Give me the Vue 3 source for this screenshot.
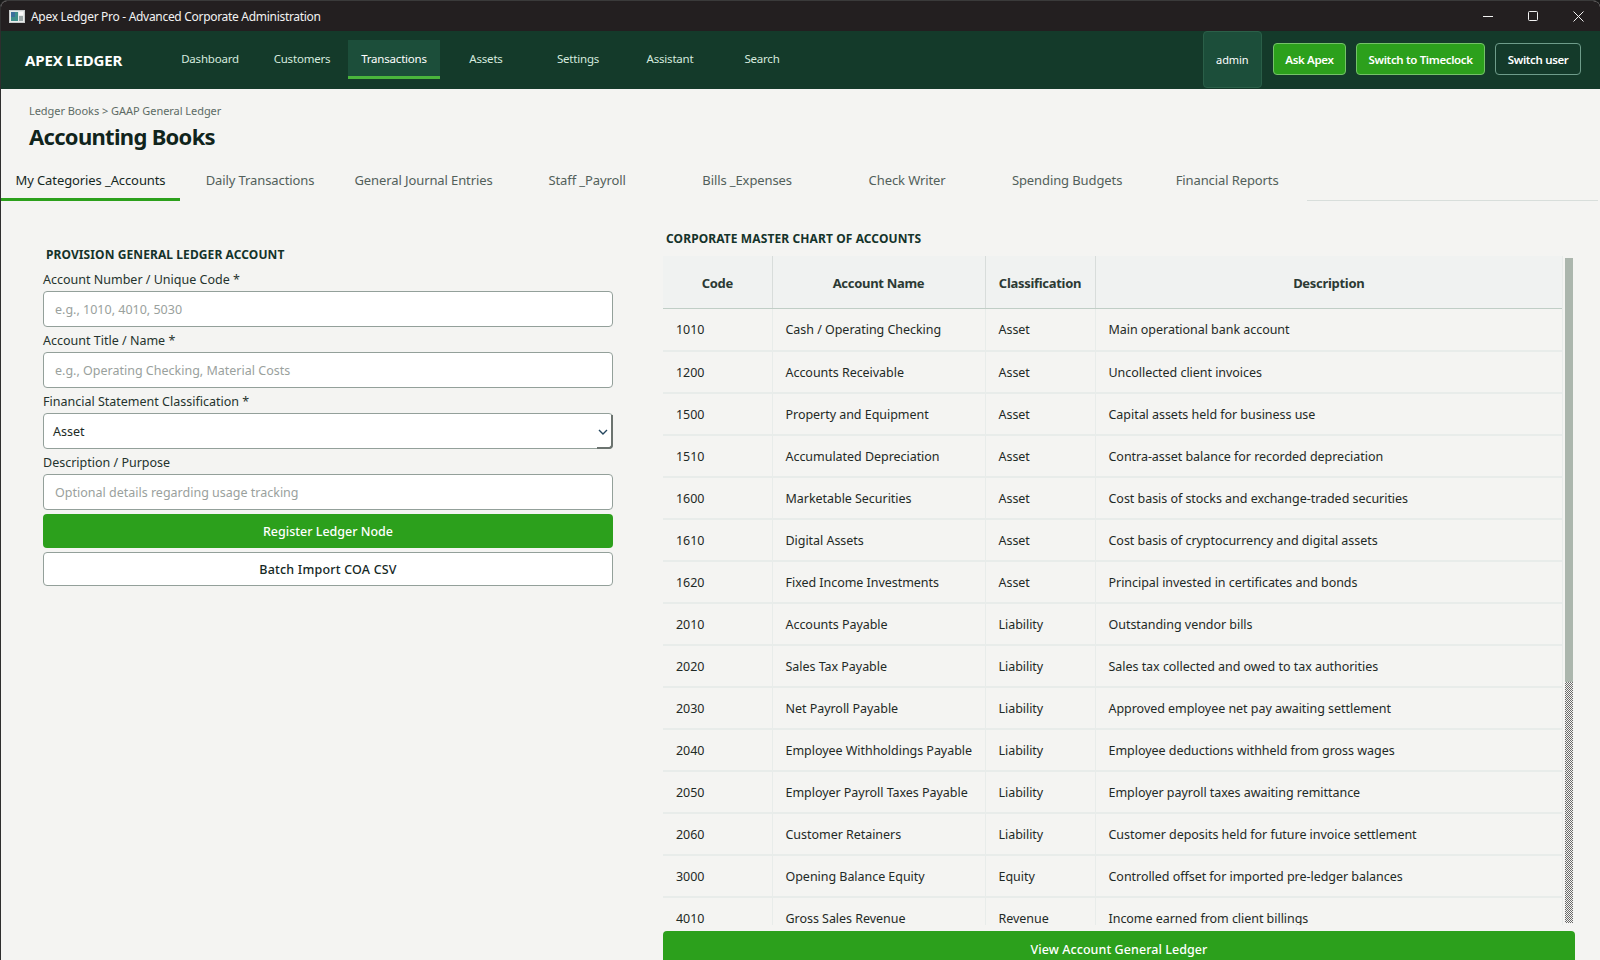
<template>
  <div class="window">
    <div class="titlebar">
      <svg class="app-icon" width="16" height="13" viewBox="0 0 16 13">
        <rect x="0.5" y="0.5" width="15" height="12" fill="#e8ecea" stroke="#c8cccc" />
        <rect x="2" y="2" width="7" height="9" fill="#3f8f8a" />
        <rect x="2" y="2" width="4" height="5" fill="#3c6f9c" />
        <rect x="10" y="2" width="4" height="3" fill="#fafafa" />
        <rect x="10" y="6" width="4" height="5" fill="#9aa6a6" />
      </svg>
      <span class="window-title">Apex Ledger Pro - Advanced Corporate Administration</span>
      <div class="win-controls">
        <svg width="10" height="10" viewBox="0 0 10 10"><path d="M0 5.5h10" stroke="#f2f2f2" fill="none" /></svg>
        <svg width="10" height="10" viewBox="0 0 10 10"><rect x="0.5" y="0.5" width="9" height="9" rx="1" stroke="#f2f2f2" fill="none" /></svg>
        <svg width="11" height="11" viewBox="0 0 11 11"><path d="M0.5 0.5l10 10M10.5 0.5l-10 10" stroke="#f2f2f2" fill="none" /></svg>
      </div>
    </div>

    <header class="navbar">
      <div class="brand">APEX LEDGER</div>
      <nav class="nav-items">
        <a v-for="item in navItems" :key="item" class="nav-item" :class="{ active: item === 'Transactions' }">{{ item }}</a>
      </nav>
      <div class="nav-right">
        <div class="user-chip">admin</div>
        <button type="button" class="nav-btn green">Ask Apex</button>
        <button type="button" class="nav-btn green">Switch to Timeclock</button>
        <button type="button" class="nav-btn outline">Switch user</button>
      </div>
    </header>

    <main class="page">
      <div class="crumbs">Ledger Books &gt; GAAP General Ledger</div>
      <h1 class="page-title">Accounting Books</h1>

      <div class="tabs">
        <a v-for="(tab, i) in tabs" :key="tab" class="tab" :class="{ active: i === 0 }">{{ tab }}</a>
        <div class="tabs-rest"></div>
      </div>

      <div class="content">
        <section class="form-col">
          <h2 class="form-heading">PROVISION GENERAL LEDGER ACCOUNT</h2>
          <label class="field-label">Account Number / Unique Code *</label>
          <input class="field" type="text" placeholder="e.g., 1010, 4010, 5030" />
          <label class="field-label">Account Title / Name *</label>
          <input class="field" type="text" placeholder="e.g., Operating Checking, Material Costs" />
          <label class="field-label">Financial Statement Classification *</label>
          <div class="select-box">
            <span>Asset</span>
            <svg width="10" height="6" viewBox="0 0 10 6"><path d="M1 1l4 4 4-4" fill="none" stroke="#24465e" stroke-width="1.4" /></svg>
          </div>
          <label class="field-label">Description / Purpose</label>
          <input class="field" type="text" placeholder="Optional details regarding usage tracking" />
          <button type="button" class="form-btn primary">Register Ledger Node</button>
          <button type="button" class="form-btn secondary">Batch Import COA CSV</button>
        </section>

        <section class="chart-col">
          <h2 class="chart-heading">CORPORATE MASTER CHART OF ACCOUNTS</h2>
          <div class="table-area">
            <div class="table-clip">
              <table class="accounts">
                <colgroup>
                  <col class="col-code" />
                  <col class="col-name" />
                  <col class="col-class" />
                  <col />
                </colgroup>
                <thead>
                  <tr>
                    <th>Code</th>
                    <th>Account Name</th>
                    <th>Classification</th>
                    <th>Description</th>
                  </tr>
                </thead>
                <tbody>
                  <tr v-for="row in accounts" :key="row[0]">
                    <td v-for="cell in row" :key="cell">{{ cell }}</td>
                  </tr>
                </tbody>
              </table>
            </div>
            <div class="scrollbar">
              <div class="scroll-thumb"></div>
              <div class="scroll-track"></div>
            </div>
          </div>
          <button type="button" class="view-btn">View Account General Ledger</button>
        </section>
      </div>
    </main>
  </div>
</template>

<script setup>
const navItems = ['Dashboard', 'Customers', 'Transactions', 'Assets', 'Settings', 'Assistant', 'Search']

const tabs = [
  'My Categories _Accounts',
  'Daily Transactions',
  'General Journal Entries',
  'Staff _Payroll',
  'Bills _Expenses',
  'Check Writer',
  'Spending Budgets',
  'Financial Reports'
]

const accounts = [
  ['1010', 'Cash / Operating Checking', 'Asset', 'Main operational bank account'],
  ['1200', 'Accounts Receivable', 'Asset', 'Uncollected client invoices'],
  ['1500', 'Property and Equipment', 'Asset', 'Capital assets held for business use'],
  ['1510', 'Accumulated Depreciation', 'Asset', 'Contra-asset balance for recorded depreciation'],
  ['1600', 'Marketable Securities', 'Asset', 'Cost basis of stocks and exchange-traded securities'],
  ['1610', 'Digital Assets', 'Asset', 'Cost basis of cryptocurrency and digital assets'],
  ['1620', 'Fixed Income Investments', 'Asset', 'Principal invested in certificates and bonds'],
  ['2010', 'Accounts Payable', 'Liability', 'Outstanding vendor bills'],
  ['2020', 'Sales Tax Payable', 'Liability', 'Sales tax collected and owed to tax authorities'],
  ['2030', 'Net Payroll Payable', 'Liability', 'Approved employee net pay awaiting settlement'],
  ['2040', 'Employee Withholdings Payable', 'Liability', 'Employee deductions withheld from gross wages'],
  ['2050', 'Employer Payroll Taxes Payable', 'Liability', 'Employer payroll taxes awaiting remittance'],
  ['2060', 'Customer Retainers', 'Liability', 'Customer deposits held for future invoice settlement'],
  ['3000', 'Opening Balance Equity', 'Equity', 'Controlled offset for imported pre-ledger balances'],
  ['4010', 'Gross Sales Revenue', 'Revenue', 'Income earned from client billings']
]
</script>

<style>
html, body {
  margin: 0;
  height: 100%;
  overflow: hidden;
  background: #1a1a1a;
}
</style>

<style scoped>
.window {
  width: 1600px;
  height: 960px;
  display: flex;
  flex-direction: column;
  overflow: hidden;
  box-sizing: border-box;
  border-left: 1px solid #2e2e2e;
  border-top: 1px solid #3a3a3a;
  border-top-left-radius: 7px;
  border-top-right-radius: 7px;
  font-family: "Noto Sans", "Open Sans", sans-serif;
  font-size: 12px;
  background: #f4f4f2;
}

.titlebar {
  height: 30px;
  flex: none;
  display: flex;
  align-items: center;
  padding-left: 8px;
  background: #231f20;
  color: #f2f2f2;
}

.app-icon {
  margin-right: 6px;
}

.window-title {
  font-size: 12px;
  letter-spacing: -0.3px;
}

.win-controls {
  margin-left: auto;
  display: flex;
  align-items: center;
  gap: 35px;
  padding-right: 16px;
}

.navbar {
  height: 58px;
  flex: none;
  display: flex;
  align-items: stretch;
  background: #143a2a;
  color: #fff;
}

.brand {
  width: 163px;
  padding-left: 24px;
  box-sizing: border-box;
  align-self: center;
  font-size: 15px;
  font-weight: 700;
  letter-spacing: -0.15px;
}

.nav-items {
  display: flex;
  align-items: flex-start;
  padding-top: 9px;
}

.nav-item {
  width: 92px;
  height: 39px;
  box-sizing: border-box;
  display: flex;
  align-items: center;
  justify-content: center;
  border-bottom: 3px solid transparent;
  color: #d6eadf;
  font-size: 11.5px;
  letter-spacing: -0.2px;
}

.nav-item.active {
  background: #1c4e3a;
  border-bottom-color: #4ab53c;
  color: #fff;
}

.nav-right {
  margin-left: auto;
  padding: 0 19px 2px 0;
  display: flex;
  align-items: center;
  gap: 10px;
}

.user-chip {
  width: 59px;
  height: 57px;
  margin-right: 1px;
  align-self: flex-start;
  box-sizing: border-box;
  display: flex;
  align-items: center;
  justify-content: center;
  background: #1c4e3a;
  border: 1px solid #2a5f48;
  border-radius: 4px;
  font-size: 11px;
  letter-spacing: -0.1px;
}

.nav-btn {
  height: 32px;
  padding: 0 11.5px;
  border-radius: 4px;
  font-family: inherit;
  font-size: 11.5px;
  font-weight: 600;
  letter-spacing: -0.35px;
  color: #fff;
}

.nav-btn.green {
  background: #2ca01c;
  border: 1px solid #74c268;
}

.nav-btn.outline {
  background: transparent;
  border: 1px solid #6f9c8a;
}

.page {
  flex: 1;
  min-height: 0;
  display: flex;
  flex-direction: column;
  color: #1c2b25;
}

.crumbs {
  margin: 14px 0 0 28px;
  line-height: 16px;
  font-size: 11px;
  letter-spacing: -0.05px;
  color: #5d6b65;
}

.page-title {
  margin: 2px 0 0 28px;
  line-height: 31px;
  font-size: 22px;
  font-weight: 700;
  letter-spacing: -0.7px;
  color: #10241c;
}

.tabs {
  height: 36px;
  margin-top: 13px;
  flex: none;
  display: flex;
}

.tab {
  min-width: 160px;
  padding: 0 14.5px 3px;
  box-sizing: border-box;
  display: flex;
  align-items: center;
  justify-content: center;
  border-bottom: 3px solid transparent;
  font-size: 13px;
  letter-spacing: -0.1px;
  color: #52605a;
}

.tab.active {
  border-bottom-color: #2ca01c;
  color: #14281f;
}

.tabs-rest {
  flex: 1;
  margin-right: 2px;
  border-bottom: 1px solid #d8dedb;
}

.content {
  flex: 1;
  min-height: 0;
  display: flex;
}

.form-col {
  width: 570px;
  margin: 42px 0 0 42px;
  display: flex;
  flex-direction: column;
}

.form-heading {
  margin: 0 0 0 3px;
  line-height: 23px;
  font-size: 12px;
  font-weight: 700;
  letter-spacing: 0.09px;
  color: #14332a;
}

.field-label {
  margin-top: 4px;
  line-height: 20px;
  font-size: 12.5px;
  color: #24332d;
}

.field-label + .field,
.field-label + .select-box {
  margin-top: 1px;
}

.field {
  height: 36px;
  padding: 1px 11px 0;
  box-sizing: border-box;
  background: #fff;
  border: 1px solid #93a09a;
  border-radius: 4px;
  outline: none;
  font-family: inherit;
  font-size: 12.5px;
}

.field::placeholder {
  color: #9aa19d;
  opacity: 1;
}

.select-box {
  position: relative;
  height: 36px;
  padding: 1px 4px 0 9px;
  box-sizing: border-box;
  display: flex;
  align-items: center;
  justify-content: space-between;
  background: #fff;
  border: 1px solid #93a09a;
  border-radius: 4px;
  font-size: 12.5px;
}

/* Dark corner that the native combo draws round its arrow */
.select-box::after {
  content: "";
  position: absolute;
  right: -1px;
  bottom: -1px;
  width: 16px;
  height: 34px;
  box-sizing: border-box;
  border-right: 2px solid #6b736f;
  border-bottom: 2px solid #6b736f;
  border-bottom-right-radius: 4px;
}

.form-btn {
  height: 34px;
  padding-top: 1px;
  box-sizing: border-box;
  border-radius: 4px;
  font-family: inherit;
  font-size: 12.5px;
  font-weight: 500;
}

.form-btn.primary {
  margin-top: 4px;
  background: #2ca01c;
  border: none;
  color: #fff;
}

.form-btn.secondary {
  margin-top: 4px;
  padding-top: 2px;
  background: #fff;
  border: 1px solid #93a09a;
  letter-spacing: 0.2px;
  color: #14281f;
}

.chart-col {
  width: 912px;
  margin-left: 50px;
  display: flex;
  flex-direction: column;
}

.chart-heading {
  margin: 28px 0 0 3px;
  line-height: 20px;
  font-size: 12px;
  font-weight: 700;
  letter-spacing: 0.1px;
  color: #14332a;
}

.table-area {
  height: 669px;
  margin-top: 7px;
  flex: none;
  display: flex;
  gap: 2px;
}

.table-clip {
  width: 900px;
  overflow: hidden;
  border-right: 1px solid #e8ecea;
  box-sizing: border-box;
}

.accounts {
  width: 899px;
  table-layout: fixed;
  border-collapse: collapse;
  font-size: 12.5px;
  letter-spacing: -0.04px;
}

.col-code {
  width: 109px;
}

.col-name {
  width: 213px;
}

.col-class {
  width: 110px;
}

.accounts th {
  height: 52px;
  padding: 2px 6px 0;
  box-sizing: border-box;
  background: #f0f2f1;
  border-right: 1px solid #d8dddb;
  border-bottom: 1px solid #c0cec6;
  font-size: 13px;
  font-weight: 700;
  letter-spacing: -0.3px;
  color: #2c3a34;
}

.accounts td {
  height: 42px;
  padding: 0 13px;
  box-sizing: border-box;
  border-right: 1px solid #e8ecea;
  border-bottom: 2px solid #e8ecea;
  color: #1f2a26;
  white-space: nowrap;
}

.accounts tbody tr:first-child td {
  height: 43px;
  padding-top: 1px;
}

.accounts th:last-child,
.accounts td:last-child {
  border-right: none;
}

.scrollbar {
  width: 8px;
  margin-top: 2px;
  height: 665px;
  display: flex;
  flex-direction: column;
}

.scroll-thumb {
  height: 424px;
  background: #abb6ad;
}

.scroll-track {
  flex: 1;
  background: repeating-conic-gradient(#6a6a6a 0 25%, #f4f4f2 0 50%) 0 0 / 2px 2px;
}

.view-btn {
  height: 36px;
  margin-top: 6px;
  flex: none;
  background: #2ca01c;
  border: none;
  border-radius: 4px;
  font-family: inherit;
  font-size: 12.5px;
  font-weight: 500;
  letter-spacing: 0.07px;
  color: #fff;
}
</style>
